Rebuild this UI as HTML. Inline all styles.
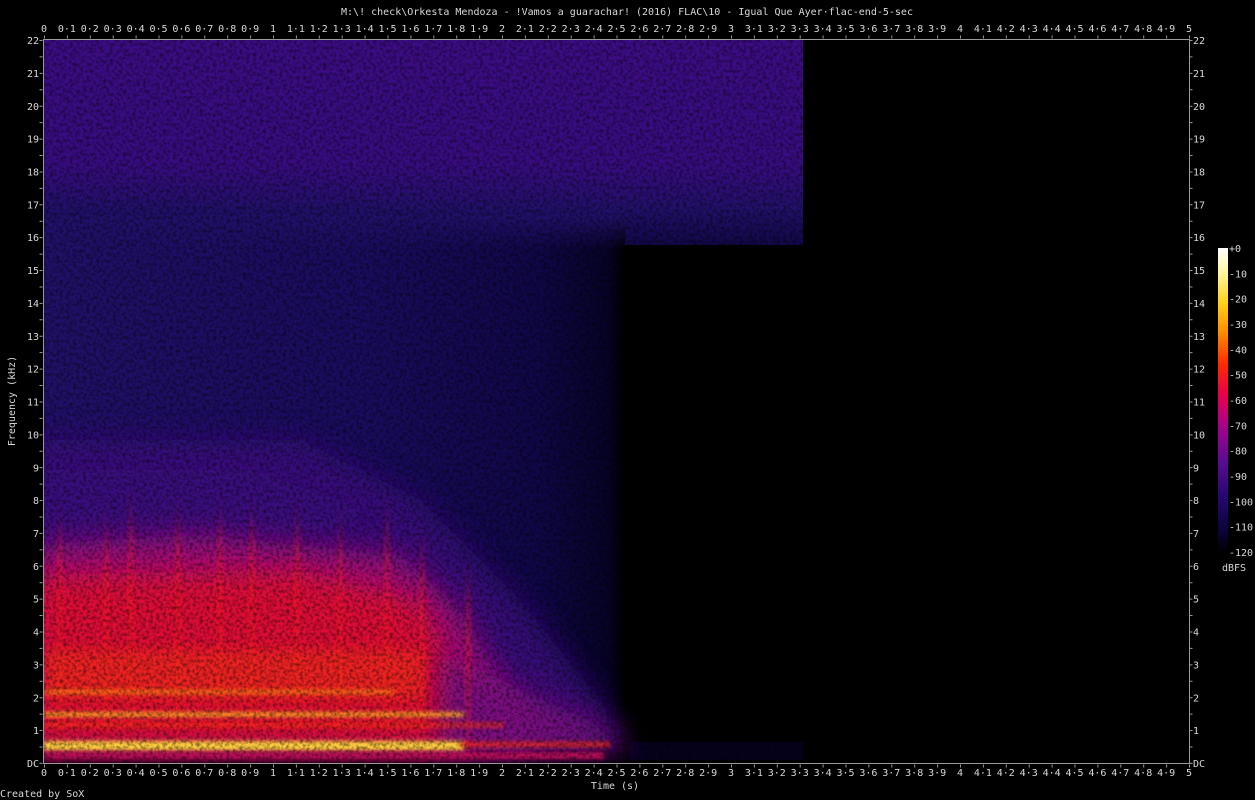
<!DOCTYPE html>
<html><head><meta charset="utf-8"><style>
html,body{margin:0;padding:0;background:#000;width:1255px;height:800px;overflow:hidden}
svg{display:block}
text{font-family:"DejaVu Sans Mono","Liberation Mono",monospace;font-size:10px;fill:#d8d8d8}
</style></head><body>
<svg width="1255" height="800" viewBox="0 0 1255 800" xmlns="http://www.w3.org/2000/svg">
<defs>
<filter id="b6" filterUnits="userSpaceOnUse" x="0" y="0" width="1255" height="800"><feGaussianBlur stdDeviation="6"/></filter>
<filter id="b14" filterUnits="userSpaceOnUse" x="0" y="0" width="1255" height="800"><feGaussianBlur stdDeviation="14"/></filter>
<filter id="b3" filterUnits="userSpaceOnUse" x="0" y="0" width="1255" height="800"><feGaussianBlur stdDeviation="2"/></filter>
<filter id="vs" filterUnits="userSpaceOnUse" x="0" y="0" width="1255" height="800"><feGaussianBlur stdDeviation="2 20"/></filter>
<filter id="noise" filterUnits="userSpaceOnUse" x="44" y="40" width="760" height="723">
<feTurbulence type="fractalNoise" baseFrequency="0.3" numOctaves="2" seed="3"/>
<feColorMatrix type="matrix" values="0 0 0 0 0  0 0 0 0 0  0 0 0 0 0  0 0 0 -1.8 1.1"/>
</filter>
<linearGradient id="purp" gradientUnits="userSpaceOnUse" x1="0" y1="40" x2="0" y2="245">
<stop offset="0" stop-color="#3c0c84"/><stop offset="0.6" stop-color="#380c80"/><stop offset="0.82" stop-color="#22106a"/><stop offset="1" stop-color="#120848"/>
</linearGradient>
<linearGradient id="navy" gradientUnits="userSpaceOnUse" x1="44" y1="0" x2="625" y2="0">
<stop offset="0" stop-color="#221068"/><stop offset="0.55" stop-color="#1a0c5e"/><stop offset="0.85" stop-color="#100748"/><stop offset="0.97" stop-color="#070328"/><stop offset="1" stop-color="#000000"/>
</linearGradient>
<linearGradient id="fadeTop" gradientUnits="userSpaceOnUse" x1="0" y1="215" x2="0" y2="250">
<stop offset="0" stop-color="#22106a" stop-opacity="1"/><stop offset="1" stop-color="#22106a" stop-opacity="0"/>
</linearGradient>
<linearGradient id="cbar" x1="0" y1="0" x2="0" y2="1">
<stop offset="0" stop-color="#ffffff"/><stop offset="0.08" stop-color="#fff6a0"/><stop offset="0.18" stop-color="#ffd21a"/><stop offset="0.28" stop-color="#ff8a00"/><stop offset="0.38" stop-color="#ff2a00"/><stop offset="0.48" stop-color="#e8004a"/><stop offset="0.58" stop-color="#a8008a"/><stop offset="0.7" stop-color="#5a0c92"/><stop offset="0.82" stop-color="#24066e"/><stop offset="0.92" stop-color="#0c0440"/><stop offset="1" stop-color="#000000"/>
</linearGradient>
<clipPath id="plot"><rect x="44" y="40" width="1145" height="723"/></clipPath>
<clipPath id="left"><rect x="44" y="40" width="759" height="723"/></clipPath>
</defs>

<text x="627" y="15" text-anchor="middle">M:\! check\Orkesta Mendoza - !Vamos a guarachar! (2016) FLAC\10 - Igual Que Ayer·flac-end-5-sec</text>

<g clip-path="url(#plot)">
<rect x="44" y="40" width="1145" height="723" fill="#000"/>
<g clip-path="url(#left)">
<rect x="44" y="40" width="759" height="205" fill="url(#purp)"/>
<rect x="44" y="215" width="581" height="535" fill="url(#navy)"/>
<rect x="44" y="215" width="581" height="35" fill="url(#fadeTop)"/>
<rect x="630" y="742" width="173" height="18" fill="#06021e"/>
<polygon points="30,440 300,440 420,500 520,600 600,700 625,750 30,750" fill="#3c0e80" opacity="0.85" filter="url(#b14)"/>
<polygon points="30,470 250,470 400,520 30,560" fill="#3c0e80" opacity="0.5" filter="url(#b14)"/>
<polygon points="30,545 200,535 400,555 460,610 500,680 540,750 30,750" fill="#a00a7a" filter="url(#b14)"/>
<polygon points="30,575 300,570 420,600 460,680 470,750 30,750" fill="#e8102a" opacity="0.85" filter="url(#b14)"/>
<polygon points="440,650 520,690 600,725 630,748 440,752" fill="#7a0a80" filter="url(#b14)"/>
<g fill="#ff1a1a" opacity="0.45" filter="url(#vs)">
<rect x="58" y="540" width="4" height="200"/><rect x="104" y="540" width="4" height="200"/><rect x="129" y="520" width="4" height="200"/><rect x="176" y="530" width="4" height="200"/><rect x="218" y="530" width="4" height="200"/><rect x="250" y="530" width="4" height="200"/><rect x="295" y="530" width="4" height="200"/><rect x="338" y="540" width="4" height="200"/><rect x="385" y="530" width="4" height="200"/><rect x="420" y="560" width="4" height="180"/><rect x="466" y="590" width="4" height="150"/>
</g>
<rect x="44" y="650" width="380" height="50" fill="#ff3a10" opacity="0.45" filter="url(#b6)"/>
<rect x="44" y="690" width="350" height="4" fill="#ff9a10" opacity="0.7" filter="url(#b3)"/>
<rect x="44" y="712" width="420" height="5" fill="#ffb020" opacity="0.9" filter="url(#b3)"/>
<rect x="44" y="723" width="460" height="4" fill="#ff3010" opacity="0.8" filter="url(#b3)"/>
<rect x="44" y="741" width="420" height="10" fill="#ffd040" filter="url(#b3)"/>
<rect x="460" y="742" width="150" height="5" fill="#ff2a10" opacity="0.8" filter="url(#b3)"/>
<rect x="44" y="752" width="560" height="7" fill="#c0105a" filter="url(#b3)"/>
<rect x="44" y="40" width="760" height="723" filter="url(#noise)" opacity="0.6"/>
</g>
</g>

<rect x="43.5" y="39.5" width="1146" height="724" fill="none" stroke="#9a9a9a" stroke-width="1"/>
<line x1="44" y1="37" x2="1190" y2="37" stroke="#9a9a9a" stroke-width="3" stroke-dasharray="1 21.9"/>
<line x1="44" y1="766" x2="1190" y2="766" stroke="#9a9a9a" stroke-width="3" stroke-dasharray="1 21.9"/>
<line x1="41" y1="40" x2="41" y2="764" stroke="#9a9a9a" stroke-width="3" stroke-dasharray="1 15.43"/>
<line x1="1191" y1="40" x2="1191" y2="764" stroke="#9a9a9a" stroke-width="3" stroke-dasharray="1 15.43"/>

<g text-anchor="middle">
<g transform="translate(0,32)">
<text x="44">0</text><text x="66.9">0·1</text><text x="89.8">0·2</text><text x="112.7">0·3</text><text x="135.6">0·4</text><text x="158.5">0·5</text><text x="181.4">0·6</text><text x="204.3">0·7</text><text x="227.2">0·8</text><text x="250.1">0·9</text><text x="273">1</text><text x="295.9">1·1</text><text x="318.8">1·2</text><text x="341.7">1·3</text><text x="364.6">1·4</text><text x="387.5">1·5</text><text x="410.4">1·6</text><text x="433.3">1·7</text><text x="456.2">1·8</text><text x="479.1">1·9</text><text x="502">2</text><text x="524.9">2·1</text><text x="547.8">2·2</text><text x="570.7">2·3</text><text x="593.6">2·4</text><text x="616.5">2·5</text><text x="639.4">2·6</text><text x="662.3">2·7</text><text x="685.2">2·8</text><text x="708.1">2·9</text><text x="731">3</text><text x="753.9">3·1</text><text x="776.8">3·2</text><text x="799.7">3·3</text><text x="822.6">3·4</text><text x="845.5">3·5</text><text x="868.4">3·6</text><text x="891.3">3·7</text><text x="914.2">3·8</text><text x="937.1">3·9</text><text x="960">4</text><text x="982.9">4·1</text><text x="1005.8">4·2</text><text x="1028.7">4·3</text><text x="1051.6">4·4</text><text x="1074.5">4·5</text><text x="1097.4">4·6</text><text x="1120.3">4·7</text><text x="1143.2">4·8</text><text x="1166.1">4·9</text><text x="1189">5</text>
</g>
<g transform="translate(0,776)">
<text x="44">0</text><text x="66.9">0·1</text><text x="89.8">0·2</text><text x="112.7">0·3</text><text x="135.6">0·4</text><text x="158.5">0·5</text><text x="181.4">0·6</text><text x="204.3">0·7</text><text x="227.2">0·8</text><text x="250.1">0·9</text><text x="273">1</text><text x="295.9">1·1</text><text x="318.8">1·2</text><text x="341.7">1·3</text><text x="364.6">1·4</text><text x="387.5">1·5</text><text x="410.4">1·6</text><text x="433.3">1·7</text><text x="456.2">1·8</text><text x="479.1">1·9</text><text x="502">2</text><text x="524.9">2·1</text><text x="547.8">2·2</text><text x="570.7">2·3</text><text x="593.6">2·4</text><text x="616.5">2·5</text><text x="639.4">2·6</text><text x="662.3">2·7</text><text x="685.2">2·8</text><text x="708.1">2·9</text><text x="731">3</text><text x="753.9">3·1</text><text x="776.8">3·2</text><text x="799.7">3·3</text><text x="822.6">3·4</text><text x="845.5">3·5</text><text x="868.4">3·6</text><text x="891.3">3·7</text><text x="914.2">3·8</text><text x="937.1">3·9</text><text x="960">4</text><text x="982.9">4·1</text><text x="1005.8">4·2</text><text x="1028.7">4·3</text><text x="1051.6">4·4</text><text x="1074.5">4·5</text><text x="1097.4">4·6</text><text x="1120.3">4·7</text><text x="1143.2">4·8</text><text x="1166.1">4·9</text><text x="1189">5</text>
</g>
</g>

<g text-anchor="end" transform="translate(39,4)">
<text y="763">DC</text><text y="730.1">1</text><text y="697.3">2</text><text y="664.4">3</text><text y="631.6">4</text><text y="598.7">5</text><text y="565.8">6</text><text y="533">7</text><text y="500.1">8</text><text y="467.3">9</text><text y="434.4">10</text><text y="401.5">11</text><text y="368.7">12</text><text y="335.8">13</text><text y="303">14</text><text y="270.1">15</text><text y="237.2">16</text><text y="204.4">17</text><text y="171.5">18</text><text y="138.7">19</text><text y="105.8">20</text><text y="72.9">21</text><text y="40.1">22</text>
</g>
<g text-anchor="start" transform="translate(1193,4)">
<text y="763">DC</text><text y="730.1">1</text><text y="697.3">2</text><text y="664.4">3</text><text y="631.6">4</text><text y="598.7">5</text><text y="565.8">6</text><text y="533">7</text><text y="500.1">8</text><text y="467.3">9</text><text y="434.4">10</text><text y="401.5">11</text><text y="368.7">12</text><text y="335.8">13</text><text y="303">14</text><text y="270.1">15</text><text y="237.2">16</text><text y="204.4">17</text><text y="171.5">18</text><text y="138.7">19</text><text y="105.8">20</text><text y="72.9">21</text><text y="40.1">22</text>
</g>

<text x="615" y="789" text-anchor="middle">Time (s)</text>
<text transform="translate(15,401) rotate(-90)" text-anchor="middle">Frequency (kHz)</text>
<text x="0" y="797">Created by SoX</text>

<rect x="1218" y="248" width="10" height="305" fill="url(#cbar)"/>
<g transform="translate(1229,4)">
<text y="248">+0</text><text y="273.3">-10</text><text y="298.7">-20</text><text y="324">-30</text><text y="349.3">-40</text><text y="374.7">-50</text><text y="400">-60</text><text y="425.3">-70</text><text y="450.7">-80</text><text y="476">-90</text><text y="501.3">-100</text><text y="526.7">-110</text><text y="552">-120</text>
</g>
<text x="1222" y="571">dBFS</text>
</svg>
</body></html>
